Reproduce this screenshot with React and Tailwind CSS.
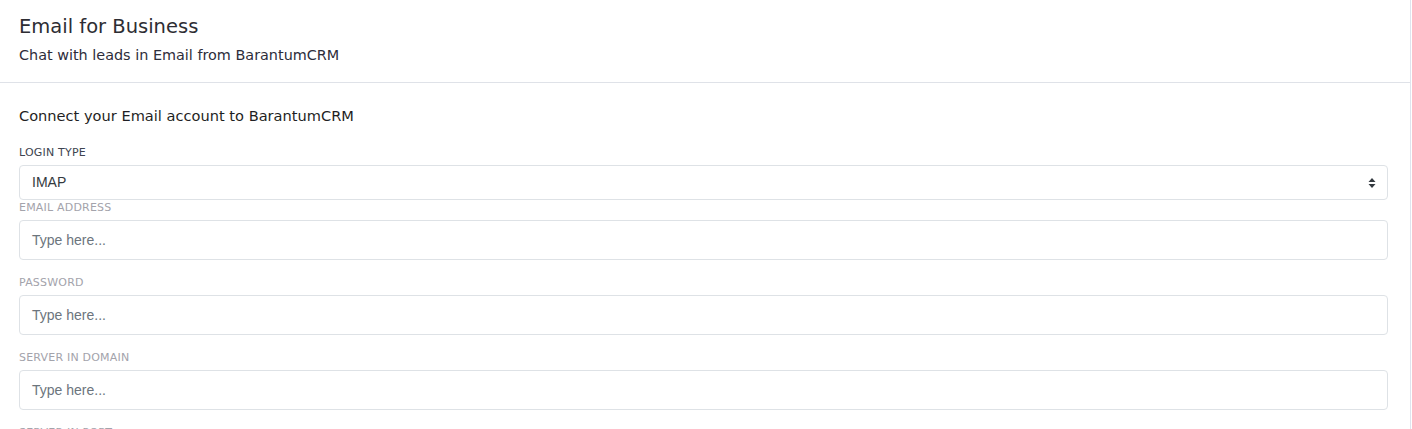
const fields = [
  { label: "EMAIL ADDRESS", first: true },
  { label: "PASSWORD" },
  { label: "SERVER IN DOMAIN" },
  { label: "SERVER IN PORT" },
];

function Caret() {
  return (
    <svg width="8" height="12" viewBox="0 0 8 12" className="text-[#343a40]">
      <path d="M4 1 L7.5 5 H0.5 Z" fill="currentColor" />
      <path d="M4 11 L7.5 7 H0.5 Z" fill="currentColor" />
    </svg>
  );
}

export default function App() {
  return (
    <div className="w-full h-[429px] bg-white overflow-hidden font-['DejaVu_Sans',sans-serif]">
      <div className="w-[1411px] h-full border-r border-[#dfe4ee] flex flex-col">
        {/* Header */}
        <div className="shrink-0 h-[83px] border-b border-[#dfe2e8] px-[19px] pt-[13px]">
          <h1 className="text-[19.5px] leading-[28px] text-[#2d2d33]">Email for Business</h1>
          <p className="mt-[4px] text-[14.4px] leading-[20px] text-[#2d2d3a]">
            Chat with leads in Email from BarantumCRM
          </p>
        </div>

        {/* Body */}
        <div className="shrink-0 pl-[19px] pr-[22px] pt-[23px]">
          <h2 className="text-[14.6px] leading-[20px] text-[#1f1f24]">
            Connect your Email account to BarantumCRM
          </h2>

          <label className="block mt-[20px] text-[11px] leading-[14px] tracking-[0.2px] text-[#3d4450]">
            LOGIN TYPE
          </label>
          <div className="mt-[5px] h-[35px] rounded-[4px] border border-[#dee2e6] flex items-center justify-between pl-[12px] pr-[11px]">
            <span className="font-['Liberation_Sans',sans-serif] text-[14px] text-[#343a40]">IMAP</span>
            <Caret />
          </div>

          {fields.map((f) => (
            <div key={f.label} className={f.first ? "mt-[1px]" : "mt-[16px]"}>
              <label className="block mb-[5px] text-[11px] leading-[14px] tracking-[0.2px] text-[#a3a3ab]">
                {f.label}
              </label>
              <div className="h-[40px] rounded-[4px] border border-[#dee2e6] flex items-center pl-[12px]">
                <span className="font-['Liberation_Sans',sans-serif] text-[14px] text-[#6c757d]">
                  Type here...
                </span>
              </div>
            </div>
          ))}
        </div>
      </div>
    </div>
  );
}
